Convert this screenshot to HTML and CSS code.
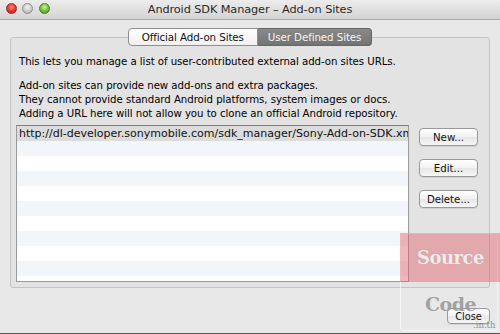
FILE: index.html
```html
<!DOCTYPE html>
<html>
<head>
<meta charset="utf-8">
<link rel="stylesheet" href="styles.css">
</head>
<body>
<div class="window">
  <div class="titlebar">
    <div class="lights">
      <span class="light red"></span>
      <span class="light gray"></span>
      <span class="light green"></span>
    </div>
    <div class="title">Android SDK Manager – Add-on Sites</div>
  </div>
  <div class="content">
    <div class="tabs">
      <div class="tab">Official Add-on Sites</div>
      <div class="tab active">User Defined Sites</div>
    </div>
    <div class="group">
      <p class="line first">This lets you manage a list of user-contributed external add-on sites URLs.</p>
      <div class="para">
        <p class="line">Add-on sites can provide new add-ons and extra packages.</p>
        <p class="line">They cannot provide standard Android platforms, system images or docs.</p>
        <p class="line">Adding a URL here will not allow you to clone an official Android repository.</p>
      </div>
      <div class="main">
        <div class="list">
          <div class="row sel">http://dl-developer.sonymobile.com/sdk_manager/Sony-Add-on-SDK.xml</div>
          <div class="row alt"></div>
          <div class="row"></div>
          <div class="row alt"></div>
          <div class="row"></div>
          <div class="row alt"></div>
          <div class="row"></div>
          <div class="row alt"></div>
          <div class="row"></div>
          <div class="row alt"></div>
          <div class="row"></div>
        </div>
        <div class="buttons">
          <button class="btn">New...</button>
          <button class="btn">Edit...</button>
          <button class="btn">Delete...</button>
        </div>
      </div>
    </div>
    <div class="footer">
      <button class="btn close">Close</button>
    </div>
  </div>
  <div class="watermark">
    <div class="wm-source">Source</div>
    <div class="wm-code">Code</div>
    <div class="wm-th">.in.th</div>
  </div>
</div>
</body>
</html>
```

FILE: styles.css
```css
html, body {
  margin: 0;
  padding: 0;
}
body {
  width: 500px;
  height: 334px;
  overflow: hidden;
  background: #e8e8e8;
  font-family: "DejaVu Sans", "Liberation Sans", sans-serif;
  color: #000;
}
.window {
  position: relative;
  width: 500px;
  height: 334px;
  box-sizing: border-box;
  border-bottom: 1px solid #555;
  background: #e8e8e8;
}
.titlebar {
  position: relative;
  height: 19px;
  background: linear-gradient(#ececec, #d4d4d4);
  border-bottom: 1px solid #a8a8a8;
  display: flex;
  align-items: center;
  justify-content: center;
}
.lights {
  position: absolute;
  left: 6px;
  top: 3px;
  display: flex;
  gap: 5px;
}
.light {
  width: 11px;
  height: 11px;
  border-radius: 50%;
  box-sizing: border-box;
}
.light.red {
  background: radial-gradient(circle at 50% 35%, #ff8a80 0%, #e0332b 55%, #a8201b 100%);
  border: 1px solid #9a2a24;
}
.light.gray {
  background: radial-gradient(circle at 50% 35%, #f4f4f4 0%, #c8c8c8 60%, #9e9e9e 100%);
  border: 1px solid #8e8e8e;
}
.light.green {
  background: radial-gradient(circle at 50% 35%, #c9f29a 0%, #6fbf3a 55%, #3f8a1c 100%);
  border: 1px solid #4d7f2a;
  margin-left: 1px;
}
.title {
  font-size: 11.3px;
  color: #2a2a2a;
  letter-spacing: -0.1px;
}
.content {
  padding: 8px 10px 0 10px;
}
.tabs {
  position: relative;
  z-index: 1;
  display: flex;
  justify-content: center;
  margin-bottom: -9px;
}
.tab {
  height: 16px;
  line-height: 16px;
  font-size: 10.3px;
  padding: 0 13px 0 13px;
  border: 1px solid #8e8e8e;
  background: linear-gradient(#ffffff, #f0f0f0);
  color: #111;
  border-radius: 4px 0 0 4px;
  letter-spacing: -0.1px;
}
.tab.active {
  background: linear-gradient(#8a8a8a, #737373);
  color: #f4f4f4;
  border-color: #666;
  border-left: none;
  border-radius: 0 4px 4px 0;
  padding: 0 10px;
}
.group {
  border: 1px solid #c4c4c4;
  border-radius: 3px;
  background: #e3e3e3;
  padding: 17px 10px 5px 5px;
}
.line {
  margin: 0;
  font-size: 10.2px;
  line-height: 14px;
  padding-left: 3px;
  letter-spacing: -0.05px;
  white-space: nowrap;
}
.para {
  margin-top: 10px;
}
.main {
  display: flex;
  gap: 10px;
  margin-top: 4px;
}
.list {
  width: 391px;
  height: 155px;
  border: 1px solid #9a9a9a;
  border-top-color: #7f7f7f;
  background: #fff;
  overflow: hidden;
}
.row {
  height: 15px;
  line-height: 15px;
  font-size: 11px;
  padding-left: 2px;
  white-space: nowrap;
  overflow: hidden;
  background: #fff;
}
.row.alt {
  background: #f2f5f9;
}
.row.sel {
  background: #dcdcdc;
  color: #111;
}
.buttons {
  display: flex;
  flex-direction: column;
  gap: 13px;
  padding-top: 3px;
}
.btn {
  width: 59px;
  height: 18px;
  padding: 0;
  font-family: "DejaVu Sans", "Liberation Sans", sans-serif;
  font-size: 10.2px;
  color: #111;
  background: linear-gradient(#ffffff, #f1f1f1 50%, #e6e6e6 51%, #f6f6f6);
  border: 1px solid #999;
  border-radius: 4px;
  box-shadow: 0 1px 0 rgba(0,0,0,0.08);
}
.footer {
  display: flex;
  justify-content: flex-end;
  margin-top: 20px;
}
.btn.close {
  width: 43px;
  height: 16px;
  font-size: 9.8px;
}
.watermark {
  position: absolute;
  z-index: 2;
  left: 400px;
  top: 233px;
  width: 96px;
  height: 96px;
  border: 1px solid rgba(255,255,255,0.6);
  border-radius: 3px;
  pointer-events: none;
}
.wm-source {
  position: absolute;
  left: -1px;
  top: -1px;
  width: 101px;
  height: 49px;
  background: rgba(226, 95, 105, 0.45);
  color: #ededed;
  font-family: "DejaVu Serif", serif;
  font-weight: bold;
  font-size: 18px;
  display: flex;
  align-items: center;
  justify-content: center;
  letter-spacing: -0.5px;
  text-shadow: 0 0 1px rgba(0,0,0,0.15);
}
.wm-code {
  position: absolute;
  left: 24px;
  top: 59px;
  color: rgba(150,150,150,0.85);
  font-family: "DejaVu Serif", serif;
  font-weight: bold;
  font-size: 19px;
  letter-spacing: -0.5px;
}
.wm-th {
  position: absolute;
  left: 72px;
  top: 86px;
  color: rgba(120,120,120,0.8);
  font-family: "DejaVu Serif", serif;
  font-size: 8.5px;
}
```
